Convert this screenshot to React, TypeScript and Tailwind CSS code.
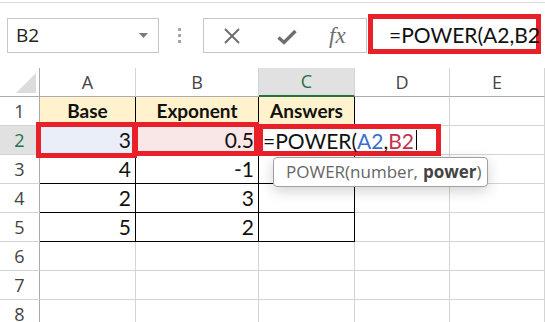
import React from "react";

const cellFont = { fontFamily: "Lato, 'Open Sans', sans-serif" };
const uiFont = { fontFamily: "'Open Sans', 'Noto Sans', sans-serif" };

type Cell = {
  text?: React.ReactNode;
  align?: "left" | "right" | "center";
  bold?: boolean;
  bg?: string;
  black?: boolean;
};

const rows: Cell[][] = [
  [
    { text: "Base", align: "center", bold: true, bg: "bg-[#fff2cc]", black: true },
    { text: "Exponent", align: "center", bold: true, bg: "bg-[#fff2cc]", black: true },
    { text: "Answers", align: "center", bold: true, bg: "bg-[#fff2cc]", black: true },
    {},
    {},
  ],
  [
    { text: "3", align: "right", bg: "bg-[#e9eef8]", black: true },
    { text: "0.5", align: "right", bg: "bg-[#f9e7e7]", black: true },
    { black: true },
    {},
    {},
  ],
  [{ text: "4", align: "right", black: true }, { text: "-1", align: "right", black: true }, { black: true }, {}, {}],
  [{ text: "2", align: "right", black: true }, { text: "3", align: "right", black: true }, { black: true }, {}, {}],
  [{ text: "5", align: "right", black: true }, { text: "2", align: "right", black: true }, { black: true }, {}, {}],
  [{}, {}, {}, {}, {}],
  [{}, {}, {}, {}, {}],
  [{}, {}, {}, {}, {}],
];

function XIcon() {
  return (
    <svg width="18" height="18" viewBox="0 0 18 18">
      <path d="M2 2 L16 16 M16 2 L2 16" stroke="#6e6e6e" strokeWidth="2" fill="none" />
    </svg>
  );
}

function CheckIcon() {
  return (
    <svg width="20" height="16" viewBox="0 0 20 16">
      <path d="M1.5 8.5 L7 13.5 L18.5 2" stroke="#6e6e6e" strokeWidth="3.4" fill="none" strokeLinejoin="miter" />
    </svg>
  );
}

export default function App() {
  return (
    <div className="w-[545px] h-[322px] overflow-hidden bg-white" style={uiFont}>
      {/* top bar */}
      <div className="h-[2px]" />
      <div className="h-[1px] bg-[#d9d9d9]" />
      <div className="relative h-[65px]">
        <div className="flex items-start pt-[15px]">
          {/* name box */}
          <div className="ml-[7px] w-[152px] h-[35px] border border-[#c6c6c6] flex items-center justify-between pl-[8px] pr-[10px]">
            <span className="text-[19px] text-[#222]" style={uiFont}>B2</span>
            <svg width="9" height="5" viewBox="0 0 9 5">
              <path d="M0 0 L9 0 L4.5 5 Z" fill="#7a7a7a" />
            </svg>
          </div>
          {/* dots */}
          <div className="ml-[19px] mt-[10px] flex flex-col gap-[3px]">
            <div className="w-[3px] h-[3px] bg-[#a6a6a6]" />
            <div className="w-[3px] h-[3px] bg-[#a6a6a6]" />
            <div className="w-[3px] h-[3px] bg-[#a6a6a6]" />
          </div>
          {/* fx box */}
          <div className="ml-[22px] w-[164px] h-[35px] border border-[#c6c6c6] flex items-center">
            <div className="ml-[19px]"><XIcon /></div>
            <div className="ml-[36px] mt-[2px]"><CheckIcon /></div>
            <div
              className="ml-[32px] text-[23px] italic text-[#6e6e6e] leading-none"
              style={{ fontFamily: "'Liberation Serif', 'DejaVu Serif', serif" }}
            >
              fx
            </div>
          </div>
        </div>
        {/* formula red box */}
        <div className="absolute left-[368px] top-[11px] w-[173px] h-[40px] border-[5px] border-[#e8202a] flex items-center pl-[16px]">
          <span className="text-[21px] text-[#111] leading-none" style={cellFont}>=POWER(A2,B2</span>
        </div>
      </div>

      {/* grid */}
      <div className="relative">
        <div className="grid grid-cols-[40px_96px_123px_96px_95px_1fr]">
          {/* header row */}
          <div className="h-[29px] border-r border-b border-r-[#ababab] border-b-[#ababab] relative overflow-hidden">
            <svg className="absolute left-[16px] top-[5px]" width="20" height="20" viewBox="0 0 20 20">
              <path d="M20 0 L20 20 L0 20 Z" fill="#dcdcdc" />
            </svg>
          </div>
          {["A", "B", "C", "D", "E"].map((c) => {
            const sel = c === "C";
            return (
              <div
                key={c}
                className={
                  sel
                    ? "h-[29px] border-r border-b-2 border-r-[#d4d4d4] border-b-[#217346] bg-[#e1e1e1] flex items-center justify-center text-[18px] text-[#217346]"
                    : "h-[29px] border-r border-b border-r-[#d4d4d4] border-b-[#ababab] flex items-center justify-center text-[18px] text-[#444]"
                }
              >
                {c}
              </div>
            );
          })}
          {rows.map((r, i) => (
            <React.Fragment key={i}>
              <div
                className={
                  i === 1
                    ? "h-[29px] border-r border-b border-r-[#ababab] border-b-[#d4d4d4] bg-[#e1e1e1] flex items-center justify-center text-[18px] text-[#217346]"
                    : "h-[29px] border-r border-b border-r-[#ababab] border-b-[#d4d4d4] flex items-center justify-center text-[18px] text-[#444]"
                }
              >
                {i + 1}
              </div>
              {r.map((c, j) => (
                <div
                  key={j}
                  className={[
                    "h-[29px] border-r border-b flex items-center px-[4px] text-[#111] whitespace-nowrap",
                    c.black ? "border-r-black border-b-black" : "border-r-[#d4d4d4] border-b-[#d4d4d4]",
                    c.bg ?? "",
                    c.align === "right" ? "justify-end" : c.align === "center" ? "justify-center" : "justify-start",
                    c.bold ? "font-bold text-[19px]" : "text-[21px]",
                  ].join(" ")}
                  style={cellFont}
                >
                  {c.text}
                </div>
              ))}
            </React.Fragment>
          ))}
        </div>

        {/* B2 dashed marker */}
        <div className="absolute left-[141px] top-[83px] w-[112px] border-b border-dashed border-[#3a8a4a]" />

        {/* red boxes */}
        <div className="absolute left-[36px] top-[54px] w-[101px] h-[36px] border-[5px] border-[#e8202a]" />
        <div className="absolute left-[133px] top-[54px] w-[126px] h-[34px] border-[5px] border-[#e8202a]" />

        {/* C2 editing text */}
        <div className="absolute left-[258px] top-[56px] w-[183px] h-[32px] border-[5px] border-[#e8202a] bg-white flex items-center">
          <span className="text-[21px] text-[#111] leading-none" style={cellFont}>
            =POWER(<span className="text-[#3a6fd0]">A2</span>,<span className="text-[#c2334d]">B2</span>
          </span>
          <div className="w-[1px] h-[20px] bg-black ml-[2px]" />
        </div>

        {/* tooltip */}
        <div
          className="absolute left-[273px] top-[89px] w-[215px] h-[30px] rounded-[4px] border border-[#a0a0a0] bg-white flex items-center pl-[12px] text-[17px] text-[#666] shadow-[0_4px_14px_rgba(0,0,0,0.18)]"
          style={uiFont}
        >
          POWER(number, <span className="font-bold text-[#444] ml-[5px]">power</span>)
        </div>
      </div>
    </div>
  );
}
